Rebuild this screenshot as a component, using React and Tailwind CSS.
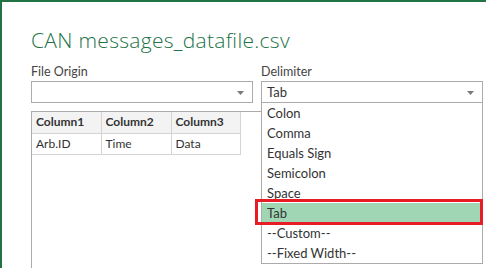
import React from 'react';

const items = ['Colon', 'Comma', 'Equals Sign', 'Semicolon', 'Space', 'Tab', '--Custom--', '--Fixed Width--'];

function Arrow() {
  return (
    <svg width="7" height="4" viewBox="0 0 7 4" className="absolute right-[8px] top-[9px]">
      <path d="M0 0 L7 0 L3.5 4 Z" fill="#7a7a7a" />
    </svg>
  );
}

function Select({ value }) {
  return (
    <div className="relative h-[22px] border border-[#ababab] bg-white pl-[5px] text-[13px] leading-[20px] text-[#333]">
      {value}
      <Arrow />
    </div>
  );
}

export default function App() {
  return (
    <div
      className="relative w-[486px] h-[268px] overflow-hidden bg-white border-l-2 border-t-2 border-[#217346] pl-[29px]"
      style={{ fontFamily: 'Lato, "Open Sans", sans-serif' }}
    >
      <div
        className="mt-[24px] text-[21px] leading-[28px] font-light tracking-[0.3px] text-[#217346]"
        style={{ fontFamily: '"Open Sans", sans-serif' }}
      >
        CAN messages_datafile.csv
      </div>

      <div className="mt-[10px] flex gap-[8px] w-[452px]">
        <div className="w-[222px]">
          <div className="text-[12.5px] leading-[16px] text-[#444]">File Origin</div>
          <div className="mt-px">
            <Select value="" />
          </div>
        </div>
        <div className="relative w-[222px]">
          <div className="text-[12.5px] leading-[16px] text-[#444]">Delimiter</div>
          <div className="mt-px">
            <Select value="Tab" />
          </div>
          {/* open dropdown list */}
          <div className="absolute left-0 top-[38px] w-[222px] h-[162px] border border-[#ababab] bg-white z-10">
            {items.map((it) => (
              <div
                key={it}
                className={`h-[20px] pl-[5px] text-[13px] leading-[20px] text-[#333] ${it === 'Tab' ? 'bg-[#a0d6b4]' : ''}`}
              >
                {it}
              </div>
            ))}
          </div>
        </div>
      </div>

      {/* preview frame */}
      <div className="mt-[8px] w-[452px] h-[200px] border-l border-t border-[#ababab]">
        <table className="border-collapse text-[12px] text-[#333]">
          <tbody>
            <tr className="bg-[#f3f3f3] h-[21px]">
              <td className="w-[69px] border-r border-b border-[#d4d4d4] pl-[4px] font-bold">Column1</td>
              <td className="w-[70px] border-r border-b border-[#d4d4d4] pl-[4px] font-bold">Column2</td>
              <td className="w-[69px] border-r border-b border-[#d4d4d4] pl-[4px] font-bold">Column3</td>
            </tr>
            <tr className="h-[21px]">
              <td className="border-r border-b border-[#d4d4d4] pl-[4px]">Arb.ID</td>
              <td className="border-r border-b border-[#d4d4d4] pl-[4px]">Time</td>
              <td className="border-r border-b border-[#d4d4d4] pl-[4px]">Data</td>
            </tr>
          </tbody>
        </table>
      </div>

      {/* annotation box around the selected item */}
      <div className="absolute left-[253px] top-[197px] w-[228px] h-[26px] border-[3px] border-[#e81c24] z-20" />
    </div>
  );
}
